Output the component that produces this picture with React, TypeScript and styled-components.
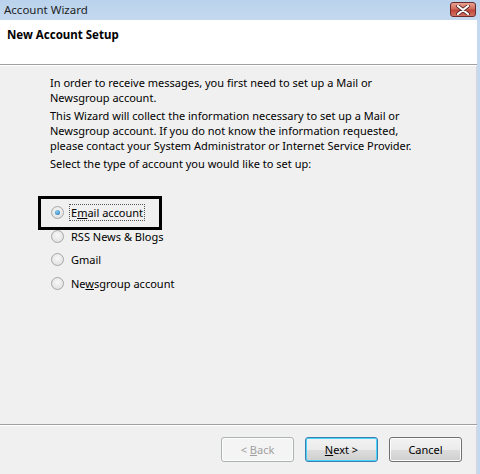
import React from "react";
import styled, { createGlobalStyle } from "styled-components";

const GlobalStyle = createGlobalStyle`
    html, body {
        margin: 0;
        padding: 0;
        background: #f0f0f0;
    }
    body {
        font-family: "Segoe UI", "Noto Sans", "Open Sans", sans-serif;
        font-size: 11px;
        color: #000;
    }
`

interface RadioProps {
    checked?: boolean
}

interface ButtonProps {
    primary?: boolean
    disabled?: boolean
}

const options = [
    { label: "Email account", key: 1, checked: true },
    { label: "RSS News & Blogs", key: -1 },
    { label: "Gmail", key: -1 },
    { label: "Newsgroup account", key: 2 },
]

const withKey = (label: string, key: number) => {
    if (key < 0) return label
    return (
        <>
            {label.slice(0, key)}
            <u>{label[key]}</u>
            {label.slice(key + 1)}
        </>
    )
}

const App = () => {
    return (
        <>
        <GlobalStyle />
        <Window>
            <TitleBar>
                <TitleText>Account Wizard</TitleText>
                <CloseButton>
                    <svg width="14" height="10" viewBox="0 0 14 10">
                        <path d="M2 1 L12 9 M12 1 L2 9" stroke="#4a2020" strokeWidth="3.6" strokeLinecap="round" />
                        <path d="M2 1 L12 9 M12 1 L2 9" stroke="#ffffff" strokeWidth="2.2" strokeLinecap="round" />
                    </svg>
                </CloseButton>
            </TitleBar>
            <Body>
                <Header>
                    <HeaderTitle>New Account Setup</HeaderTitle>
                </Header>
                <Content>
                    <Paragraph>In order to receive messages, you first need to set up a Mail or Newsgroup account.</Paragraph>
                    <Paragraph>This Wizard will collect the information necessary to set up a Mail or Newsgroup account. If you do not know the information requested, please contact your System Administrator or Internet Service Provider.</Paragraph>
                    <Paragraph>Select the type of account you would like to set up:</Paragraph>
                    <OptionList>
                        {options.map((o) => (
                            <OptionRow key={o.label} highlighted={o.checked}>
                                <Radio checked={o.checked} />
                                <OptionLabel focused={o.checked}>{withKey(o.label, o.key)}</OptionLabel>
                            </OptionRow>
                        ))}
                    </OptionList>
                </Content>
                <Footer>
                    <Button disabled><span>&lt; <u>B</u>ack</span></Button>
                    <Button primary><span><u>N</u>ext &gt;</span></Button>
                    <Button><span>Cancel</span></Button>
                </Footer>
            </Body>
        </Window>
        </>
    )
}

const Window = styled.div`
    width: 480px;
    height: 474px;
    display: flex;
    flex-direction: column;
    background: #f0f0f0;
    overflow: hidden;
`

const TitleBar = styled.div`
    height: 20px;
    flex-shrink: 0;
    display: flex;
    align-items: center;
    justify-content: space-between;
    padding: 0 4px 0 4px;
    background: linear-gradient(#bad2ec, #c4d9f0);
`

const TitleText = styled.span`
    font-size: 11.5px;
    color: #1e1e1e;
    margin-top: -1px;
`

const CloseButton = styled.div`
    width: 26px;
    height: 15px;
    margin-top: -1px;
    box-sizing: border-box;
    border: 1px solid #6b2a2a;
    border-radius: 3px;
    background: linear-gradient(#e8a392 0%, #d06b5c 45%, #c0453a 55%, #d27363 100%);
    display: flex;
    align-items: center;
    justify-content: center;
`

const Body = styled.div`
    flex: 1;
    display: flex;
    flex-direction: column;
    border-right: 3px solid #c4d9f0;
    box-shadow: inset -1px 0 0 #d8d8d8;
`

const Header = styled.div`
    height: 45px;
    flex-shrink: 0;
    background: #ffffff;
    border-bottom: 1px solid #a0a0a0;
    box-shadow: 0 1px 0 #ffffff;
    padding: 7px 0 0 7px;
    box-sizing: border-box;
`

const HeaderTitle = styled.div`
    font-weight: bold;
    font-size: 11.5px;
`

const Content = styled.div`
    flex: 1;
    padding: 10px 0 0 50px;
`

const Paragraph = styled.p`
    max-width: 368px;
    margin: 0 0 3px 0;
    line-height: 15px;
`

const OptionList = styled.div`
    display: flex;
    flex-direction: column;
    align-items: flex-start;
    margin-top: 30px;
    margin-left: -7px;
`

const OptionRow = styled.div<{ highlighted?: boolean }>`
    display: flex;
    align-items: center;
    width: 114px;
    height: 23.5px;
    box-sizing: border-box;
    padding-left: 8px;
    outline: ${(p) => (p.highlighted ? "3px solid #000" : "none")};
    outline-offset: 2px;
`

const Radio = styled.span<RadioProps>`
    flex-shrink: 0;
    width: 13px;
    height: 13px;
    border-radius: 50%;
    box-sizing: border-box;
    border: 1px solid #a7a7a7;
    background: radial-gradient(circle at 50% 40%, #f8f8f8, #dcdcdc);
    display: inline-flex;
    align-items: center;
    justify-content: center;
    margin-right: 6px;
    &::after {
        content: "";
        width: 5px;
        height: 5px;
        border-radius: 50%;
        display: ${(p) => (p.checked ? "block" : "none")};
        background: radial-gradient(circle at 40% 35%, #8cd0f5, #1a6bb0);
    }
`

const OptionLabel = styled.span<{ focused?: boolean }>`
    white-space: nowrap;
    padding: 0 1px;
    line-height: 15px;
    outline: ${(p) => (p.focused ? "1px dotted #555" : "none")};
`

const Footer = styled.div`
    height: 50px;
    flex-shrink: 0;
    border-top: 1px solid #a0a0a0;
    box-shadow: inset 0 1px 0 #ffffff;
    display: flex;
    justify-content: flex-end;
    align-items: flex-start;
    gap: 11px;
    padding: 12px 15px 0 0;
    box-sizing: border-box;
`

const Button = styled.div<ButtonProps>`
    width: 73px;
    height: 25px;
    box-sizing: border-box;
    border-radius: 3px;
    display: flex;
    align-items: center;
    justify-content: center;
    white-space: pre;
    border: 1px solid ${(p) => (p.disabled ? "#adb2b5" : p.primary ? "#3c7fb1" : "#707070")};
    color: ${(p) => (p.disabled ? "#a0a0a0" : "#000")};
    background: ${(p) =>
        p.disabled
            ? "#f4f4f4"
            : "linear-gradient(#f2f2f2 0%, #ebebeb 50%, #dddddd 51%, #cfcfcf 100%)"};
    box-shadow: ${(p) => (p.primary ? "inset 0 0 0 1px #48d4fc" : "inset 0 0 0 1px #fcfcfc")};
`

export default App
